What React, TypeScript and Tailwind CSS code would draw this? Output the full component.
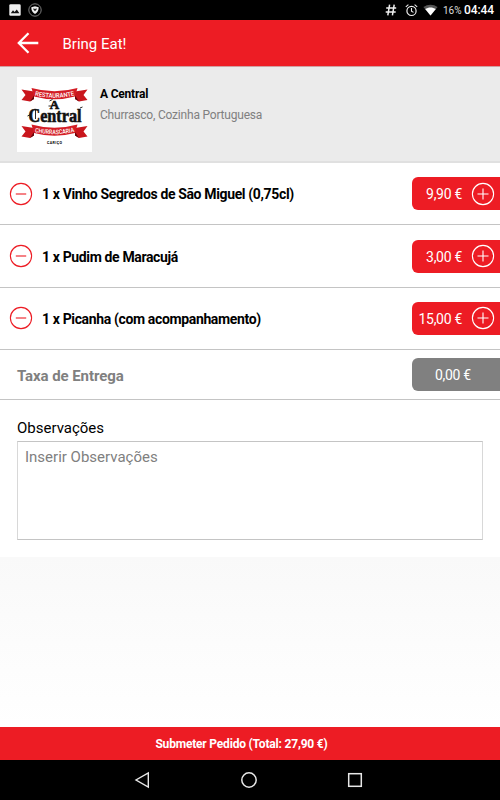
const items = [
  { name: "1 x Vinho Segredos de São Miguel (0,75cl)", price: "9,90 €" },
  { name: "1 x Pudim de Maracujá", price: "3,00 €" },
  { name: "1 x Picanha (com acompanhamento)", price: "15,00 €" },
];

function StatusBar() {
  return (
    <div className="flex h-5 shrink-0 items-center bg-black text-white">
      <svg className="ml-[9px]" width="12" height="12" viewBox="0 0 12 12">
        <rect x="0.3" y="0.3" width="11.4" height="11.4" rx="1.3" fill="#eee" />
        <path d="M1.8 9.2 4 6.2l1.6 1.9L7.8 5.4l2.6 3.8z" fill="#111" />
      </svg>
      <svg className="ml-[7px]" width="14" height="14" viewBox="0 0 14 14">
        <circle cx="7" cy="7" r="6.2" fill="none" stroke="#999" strokeWidth="0.8" />
        <path d="M3.3 4.2 7 3.3l3.7.9c0 3.2-1.2 5.3-3.7 6.8-2.5-1.5-3.7-3.6-3.7-6.8z" fill="#eee" />
        <path d="M5.4 5.3 7 6l1.6-.7v1.2L7 8.2 5.4 6.5z" fill="#222" />
      </svg>
      <svg className="ml-auto" width="12" height="12" viewBox="0 0 12 12" fill="none" stroke="#eee" strokeWidth="1.5">
        <path d="M4.6.7 2.8 11.3M9.2.7 7.4 11.3M1.2 4h10M.7 8h10" />
      </svg>
      <svg className="ml-[8px]" width="13" height="13" viewBox="0 0 13 13" fill="none" stroke="#eee">
        <circle cx="6.5" cy="6.9" r="4.6" strokeWidth="1.2" />
        <path d="M6.5 4.1v3l2 1.3M.8 2.9 3.4.7M12.2 2.9 9.6.7" strokeWidth="1.1" />
      </svg>
      <svg className="ml-[5px]" width="15" height="12" viewBox="0 0 15 12">
        <path d="M.4 3.1C4.5-.2 10.5-.2 14.6 3.1L7.5 11.6z" fill="#555" />
        <path d="M2.2 5.1C5.4 2.8 9.6 2.8 12.8 5.1L7.5 11.6z" fill="#fff" />
      </svg>
      <span className="ml-[5px] w-[19px] text-[10px] text-[#ddd]">16%</span>
      <span className="mr-[6px] ml-[2px] w-[30px] text-[12px] font-medium tracking-[-0.1px]">04:44</span>
    </div>
  );
}

function Ribbon({ id, label, y }: { id: string; label: string; y: number }) {
  return (
    <g transform={`translate(0 ${y})`}>
      <path
        d="M4.5 12.5 17 14.5v7.5L13 24.5 4.5 23 8.5 18zM70.5 12.5 58 14.5v7.5L62 24.5 70.5 23 66.5 18z"
        fill="#c9161d"
      />
      <path d="M13 24.5l4-2.5v-3.5zM62 24.5l-4-2.5v-3.5z" fill="#65070b" />
      <path d="M14.5 11Q37.5 17.5 60.5 11L58 19.5Q37.5 25 17 19.5z" fill="#d31d25" />
      <path id={id} d="M17 18.2Q37.5 23.2 58 18.2" fill="none" />
      <text fill="#fff" fontSize="6.3" fontWeight="500" textLength="40" lengthAdjust="spacingAndGlyphs">
        <textPath href={`#${id}`} startOffset="0.8" textLength="40" lengthAdjust="spacingAndGlyphs">
          {label}
        </textPath>
      </text>
    </g>
  );
}

function Logo() {
  return (
    <svg className="h-[75px] w-[75px] bg-white" viewBox="0 0 75 75">
      <Ribbon id="ribbon-top" label="RESTAURANTE" y={0} />
      <Ribbon id="ribbon-bottom" label="CHURRASCARIA" y={36.5} />
      <g fontFamily="Liberation Serif, serif" fontWeight="700" fill="#111" stroke="#111" strokeWidth="0.6">
        <text x="32.7" y="31.7" fontSize="13">A</text>
        <text x="11.5" y="44.8" fontSize="18.5" textLength="53" lengthAdjust="spacingAndGlyphs">Central</text>
      </g>
      <path
        d="M10.5 39l3-1.5M18.5 33v9M32.5 24l3-1.5M31.5 29h3M63 31l2.5-1"
        fill="none"
        stroke="#111"
        strokeWidth="0.9"
      />
      <text x="30" y="67" fontSize="3.6" fontWeight="700" textLength="15">CARIÇO</text>
    </svg>
  );
}

function RoundIcon({ plus }: { plus?: boolean }) {
  return (
    <svg width="24" height="24" viewBox="0 0 24 24" fill="none" stroke="currentColor" strokeWidth="1.1">
      <circle cx="12" cy="12" r="10.6" />
      <path d={plus ? "M6.5 12h11M12 6.5v11" : "M6.8 12h10.4"} />
    </svg>
  );
}

export default function App() {
  return (
    <div className="flex h-[800px] w-[500px] flex-col overflow-hidden bg-white font-['Roboto',sans-serif] text-black">
      <StatusBar />
      <header className="flex h-[46px] shrink-0 items-center bg-[#ed1c24] text-white">
        <svg className="ml-[17px]" width="22" height="22" viewBox="0 0 22 22" fill="none" stroke="currentColor" strokeWidth="2.3">
          <path d="M11.5 1.3 1.8 11l9.7 9.7M1.8 11H21.3" />
        </svg>
        <h1 className="ml-[23.5px] pt-[2px] text-[15px] leading-5">Bring Eat!</h1>
      </header>

      <section className="flex h-[97px] shrink-0 border-t border-b-2 border-t-[#d0a0a2] border-b-[#e0e0e0] bg-[#ebebeb] pt-[10px] pl-[17px]">
        <Logo />
        <div className="ml-2 pt-[9px]">
          <h2 className="text-[12px] leading-4 font-bold tracking-[-0.2px]">A Central</h2>
          <p className="mt-[5px] text-[12px] leading-4 tracking-[-0.2px] text-[#808080]">Churrasco, Cozinha Portuguesa</p>
        </div>
      </section>

      <ul className="shrink-0">
        {items.map((item) => (
          <li key={item.name} className="flex h-[62.4px] items-center border-b border-[#c4c4c4]">
            <button className="ml-[9px] text-[#ed1c24]">
              <RoundIcon />
            </button>
            <span className="ml-[9px] flex-1 pt-[2px] text-[14px] font-bold tracking-[-0.36px]">{item.name}</span>
            <div className="flex h-[33px] w-[88px] items-center justify-end rounded-l-[6px] bg-[#ed1c24] pr-[5px] text-white">
              <span className="mr-[9px] pt-[2px] text-[14px] tracking-[-0.3px]">{item.price}</span>
              <RoundIcon plus />
            </div>
          </li>
        ))}
      </ul>

      <div className="flex h-[50px] shrink-0 items-center justify-between border-b border-[#c4c4c4] pl-[17px]">
        <span className="pt-[4px] text-[15px] font-bold tracking-[-0.08px] text-[#808080]">Taxa de Entrega</span>
        <div className="flex h-[33px] w-[88px] items-center rounded-l-[6px] bg-[#808080] pt-[2px] pl-[23px] text-[14px] tracking-[-0.3px] text-white">
          0,00 €
        </div>
      </div>

      <section className="h-[157px] shrink-0 px-[17px] pt-[17px]">
        <label className="block text-[15px] leading-[22px]">Observações</label>
        <div className="mt-[2px] h-[99px] border border-[#c4c4c4] border-x-[#d8d8d8] px-[7px] pt-[4px] text-[15px] leading-[22px] text-[#808080]">
          Inserir Observações
        </div>
      </section>

      <div className="flex-1 bg-linear-to-b from-[#f9f9f9] to-white" />

      <button className="h-[33px] shrink-0 bg-[#ed1c24] pt-px pr-[17px] text-[12px] font-bold tracking-[-0.19px] text-white">
        Submeter Pedido (Total: 27,90 €)
      </button>

      <nav className="flex h-10 shrink-0 items-center bg-black">
        <svg className="ml-[134px]" width="16" height="18" viewBox="0 0 16 18" fill="none" stroke="#e8e8e8" strokeWidth="1.4">
          <path d="M14.3 2v14L2 9z" />
        </svg>
        <svg className="ml-[90px]" width="18" height="18" viewBox="0 0 18 18" fill="none" stroke="#e8e8e8" strokeWidth="1.5">
          <circle cx="9" cy="9" r="7.2" />
        </svg>
        <svg className="ml-[89px]" width="16" height="16" viewBox="0 0 16 16" fill="none" stroke="#e8e8e8" strokeWidth="1.5">
          <rect x="1.7" y="1.7" width="12.6" height="12.6" />
        </svg>
      </nav>
    </div>
  );
}
